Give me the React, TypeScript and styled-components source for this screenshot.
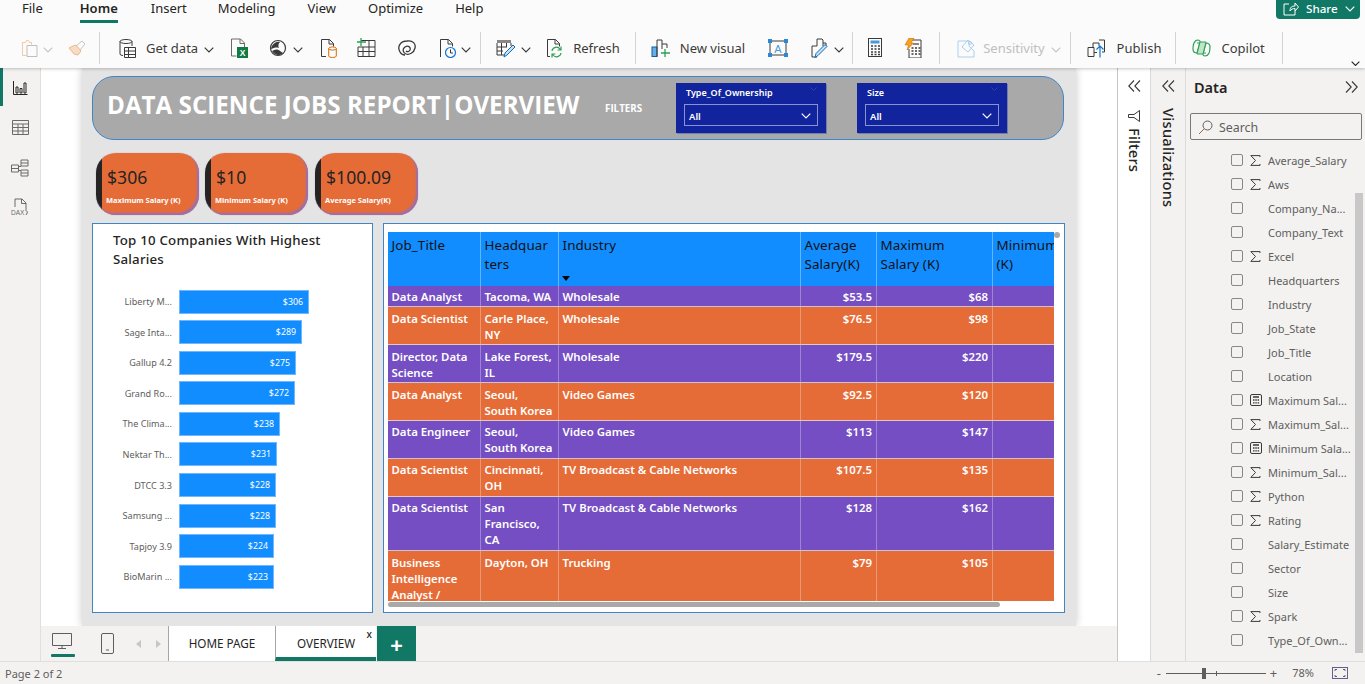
import React from "react";
import styled, { createGlobalStyle } from "styled-components";

const Global = createGlobalStyle`
  html, body { margin: 0; padding: 0; height: 100%; overflow: hidden; background: #fff; }
  body { font-family: "Noto Sans", "Open Sans", sans-serif; color: #252423; }
  * { box-sizing: border-box; }
`;

const Shell = styled.div`
  width: 1365px; height: 684px; display: grid; grid-template-rows: 68px 593px 23px; overflow: hidden;
`;
const Ribbon = styled.header`
  background: #fbfbfb; position: relative; z-index: 3; box-shadow: 0 1px 3px rgba(0,0,0,.22);
  display: flex; flex-direction: column;
`;
const TabRow = styled.nav`
  height: 28px; display: flex; align-items: flex-start; position: relative; padding-left: 22px;
`;
const MenuTab = styled.div<{ $ml: number; $active?: boolean }>`
  margin-left: ${p => p.$ml}px; height: 23px; font-size: 13px; line-height: 16px; color: #252423;
  font-weight: ${p => (p.$active ? 600 : 400)};
  border-bottom: ${p => (p.$active ? "3px solid #117865" : "3px solid transparent")};
`;
const ShareButton = styled.button`
  position: absolute; right: 5px; top: 0; width: 84px; height: 19px; border: 0; padding: 0 0 2px 7px;
  background: #117865; color: #fff; border-radius: 0 0 4px 4px; display: flex; align-items: center; gap: 7px;
  font: 500 11.6px "Noto Sans", sans-serif;
`;
const Toolbar = styled.div`
  height: 40px; display: flex; align-items: center; position: relative; padding-bottom: 0;
`;
const Tool = styled.div<{ $x: number; $faded?: boolean }>`
  margin-left: ${p => p.$x}px; display: flex; align-items: center; flex: none;
  font-size: 13px; color: ${p => (p.$faded ? "#c0bfbe" : "#3b3a39")}; white-space: nowrap;
`;
const Label = styled.span<{ $ml: number }>`
  margin-left: ${p => p.$ml}px;
`;
const Divider = styled.div<{ $x: number }>`
  margin-left: ${p => p.$x}px; width: 1px; height: 32px; background: #d4d3d2; flex: none;
`;
const CollapseRibbon = styled.div`
  position: absolute; right: 5px; bottom: 2px; line-height: 0;
`;

const Middle = styled.main`
  display: flex; min-height: 0;
`;
const Rail = styled.aside`
  width: 41px; background: #f3f2f1; border-right: 1px solid #e1dfdd; display: flex; flex-direction: column; align-items: center; flex: none; position: relative; padding-top: 10px; gap: 21px;
`;
const RailMark = styled.div`
  position: absolute; left: 0; top: 0; width: 3px; height: 38px; background: #117865;
`;
const RailIcon = styled.div`
  height: 19px; line-height: 0; display: flex; align-items: center;
`;
const CanvasColumn = styled.section`
  width: 1076px; display: flex; flex-direction: column; flex: none;
`;
const CanvasArea = styled.div`
  height: 558px; background: #fff; padding-left: 41px; overflow: hidden; flex: none;
`;
const Page = styled.div`
  width: 994px; height: 558px; background: #e4e4e4; box-shadow: 0 0 8px rgba(0,0,0,.22);
  padding: 8px 12px 13px 10px; display: flex; flex-direction: column;
`;
const Banner = styled.div`
  height: 64px; flex: none; background: #a9a9a9; border: 1px solid #3f86c9; border-radius: 22px;
  display: flex; align-items: center; position: relative; padding-left: 14px;
`;
const BannerTitle = styled.h1`
  margin: 0 0 6px; width: 498px; font-size: 24.2px; line-height: 30px; font-weight: 700; color: #fff; white-space: nowrap; flex: none; font-family: "Open Sans", sans-serif;
`;
const FiltersLabel = styled.div`
  width: 71px; font-size: 9.8px; font-weight: 700; color: #fff; flex: none; font-family: "Open Sans", sans-serif;
`;
const Slicer = styled.div<{ $ml?: number }>`
  width: 150px; height: 50px; margin-left: ${p => p.$ml ?? 0}px; background: #12239e; padding: 3px 8px 0; position: relative; flex: none; box-shadow: 1px 1px 0 rgba(70,90,170,.55);
`;
const SlicerTitle = styled.div`
  font-size: 9px; line-height: 14px; font-weight: 600; color: #fff; padding-left: 2px; margin-bottom: 4px;
`;
const SlicerClear = styled.div`
  position: absolute; right: 9px; top: 2px; line-height: 0;
`;
const SlicerBox = styled.div`
  height: 22px; border: 1px solid #8a93cf; display: flex; align-items: center; justify-content: space-between; padding: 2px 6px 0 4px; font-size: 9.5px; font-weight: 600; color: #fff;
`;
const KpiRow = styled.div`
  display: flex; margin: 13px 0 8px 4px; height: 62px; flex: none;
`;
const Kpi = styled.div<{ $ml: number }>`
  width: 103px; height: 62px; margin-left: ${p => p.$ml}px; background: linear-gradient(90deg, #252423 6px, #e66c37 6px); border-radius: 20px;
  box-shadow: inset -2px -2px 2px #9a6fb0, 0 0 1px #8a80b8; padding: 11px 0 0 11px; flex: none;
`;
const KpiValue = styled.div`
  font-size: 17.6px; line-height: 26px; color: #252423;
`;
const KpiCaption = styled.div`
  font-size: 7.5px; line-height: 10px; font-weight: 700; color: #fff; margin-top: 5px; white-space: nowrap; margin-left:-1px;
`;
const BottomRow = styled.div`
  display: flex; gap: 10px; height: 390px; flex: none;
`;
const ChartCard = styled.div`
  width: 281px; height: 390px; background: #fff; border: 1px solid #3f86c9; padding: 7px 0 0 20px; flex: none;
`;
const ChartTitle = styled.h2`
  margin: 0; width: 240px; font-size: 13.3px; line-height: 19px; font-weight: 500; color: #252423; letter-spacing: .2px;
`;
const Bars = styled.div`
  margin: 20.5px 0 0 -20px; display: flex; flex-direction: column; gap: 6.6px;
`;
const BarRow = styled.div`
  height: 24px; display: flex; align-items: center;
`;
const BarName = styled.div`
  width: 79px; text-align: right; font-size: 9.1px; color: #605e5c; flex: none; white-space: nowrap;
`;
const Bar = styled.div`
  height: 24px; margin-left: 7px; background: #118dff; border: 1px solid #70b8fb; color: #fff; font-size: 8.8px; display: flex; align-items: center; justify-content: flex-end; padding-right: 5px;
`;
const TableCard = styled.div`
  width: 682px; height: 390px; background: #fff; border: 1px solid #3f86c9; padding: 8px 0 0 4px; position: relative; flex: none;
`;
const TableClip = styled.div`
  width: 666px; height: 369px; overflow: hidden;
`;
const Row = styled.div<{ $h: number; $bg: string; $pt: number }>`
  display: grid; grid-template-columns: 93px 78px 242px 76px 116px 80px; width: 685px; height: ${p => p.$h}px; background: ${p => p.$bg}; overflow: hidden;
  border-bottom: 1px solid rgba(225,225,225,.8);
  & > div { padding-top: ${p => p.$pt}px; }
`;
const HeadRow = styled.div`
  display: grid; grid-template-columns: 93px 78px 242px 76px 116px 80px; width: 685px; height: 54px; background: #118dff;
`;
const HeadCell = styled.div`
  padding: 4px 3px 0 3.500px; font-size: 13.4px; line-height: 19px; color: #111; position: relative; letter-spacing: .1px;
  border-right: 1px solid rgba(255,255,255,.35); overflow: hidden; white-space: pre-line;
`;
const SortMark = styled.span`
  position: absolute; left: 3px; bottom: 5px; width: 0; height: 0; border: 4px solid transparent; border-top: 5px solid #000; border-bottom: 0;
`;
const Cell = styled.div<{ $num?: boolean }>`
  padding: 4px 4px 0 3.500px; font-size: 11.4px; line-height: 16px; font-weight: 600; color: #fff; text-align: ${p => (p.$num ? "right" : "left")};
  border-right: 1px solid rgba(255,255,255,.3); overflow: hidden; white-space: pre-line;
`;
const HScroll = styled.div`
  position: absolute; left: 4px; top: 378px; width: 612px; height: 5px; background: #a9a9a9; border-radius: 3px;
`;
const VScroll = styled.div`
  position: absolute; left: 670px; top: 8px; width: 6px; height: 6px; background: #a9a9a9; border-radius: 50%;
`;
const PageTabs = styled.div`
  height: 35px; background: #f3f2f1; display: flex; align-items: stretch; flex: none; position: relative;
`;
const ViewBtn = styled.div<{ $w: number; $on?: boolean }>`
  width: ${p => p.$w}px; display: flex; align-items: flex-start; justify-content: center; padding-top: 7px; flex: none; position: relative; line-height: 0;
  &::after { content: ""; display: ${p => (p.$on ? "block" : "none")}; position: absolute; left: 10px; right: 8px; bottom: 4px; height: 3px; border-radius: 1px; background: #117865; }
`;
const Arrows = styled.div`
  width: 37px; display: flex; align-items: center; justify-content: space-between; padding: 0 7px 0 5px; flex: none;
`;
const PageTab = styled.div<{ $w: number; $on?: boolean }>`
  width: ${p => p.$w}px; background: #fff; border-left: 1px solid #a6a6a6; position: relative; display: flex; align-items: center; justify-content: center; font-size: 11.7px; color: #252423; padding-top: 2px; flex: none;
  border-bottom: ${p => (p.$on ? "4px solid #117865" : "0")}; padding-bottom: ${p => (p.$on ? "0" : "4px")};
`;
const TabClose = styled.span`
  position: absolute; right: 4px; top: 2px; font-size: 10px; line-height: 12px; font-weight: 500;
`;
const AddTab = styled.div`
  width: 39px; background: #117865; color: #fff; font-size: 22px; font-weight: 700; display: flex; align-items: center; justify-content: center; flex: none; margin-left: 1px; line-height: 1;
`;
const SidePanel = styled.aside<{ $w: number }>`
  width: ${p => p.$w}px; background: #fff; border-left: 1px solid #c8c6c4; display: flex; flex-direction: column; align-items: center; padding-top: 12px; flex: none;
`;
const VizPanel = styled(SidePanel)`
  background: #f3f2f1; border-left-color: #dcdad8;
`;
const Vertical = styled.div<{ $mt: number }>`
  writing-mode: vertical-rl; font-size: 14.8px; line-height: 17px; margin-top: ${p => p.$mt}px; font-weight: 500; color: #252423; letter-spacing: .1px;
`;
const VerticalWide = styled(Vertical)`
  font-size: 14.7px; letter-spacing: .25px;
`;
const FunnelSlot = styled.div`
  margin-top: 18px; line-height: 0;
`;
const DataPanel = styled.aside`
  flex: 1; background: #f3f2f1; border-left: 1px solid #dcdad8; position: relative; padding: 7px 3px 0 4px; overflow: hidden;
`;
const DataHead = styled.div`
  height: 23px; display: flex; align-items: center; justify-content: space-between; font-size: 14.5px; font-weight: 600; padding: 0 4px 0 4px;
`;
const SearchBox = styled.div`
  height: 27px; margin-top: 15px; border: 1px solid #7a7876; border-radius: 2px; background: #f3f2f1; display: flex; align-items: center; padding: 1px 0 0 7px; gap: 6px; font-size: 12.4px; color: #605e5c;
`;
const Fields = styled.div`
  margin-top: 8px;
`;
const Field = styled.div`
  height: 24px; display: flex; align-items: center; padding-left: 41px; font-size: 11px; color: #605e5c; white-space: nowrap;
`;
const Check = styled.span`
  width: 12px; height: 12px; border: 1px solid #8a8886; border-radius: 2px; flex: none;
`;
const FieldIcon = styled.span`
  width: 12px; margin: 0 6px 0 7px; display: flex; line-height: 0; flex: none;
`;
const DataScroll = styled.div`
  position: absolute; left: 169px; top: 125px; width: 8px; height: 460px; background: #c8c8c8;
`;
const StatusBar = styled.footer`
  background: #f3f2f1; border-top: 1px solid #e1dfdd; display: flex; align-items: center; padding: 0 0 0 5px; font-size: 11px; color: #605e5c; position: relative; z-index: 2;
`;
const StatusRight = styled.div`
  margin-left: auto; display: flex; align-items: center; padding-right: 17px; line-height: 0;
`;
const Zoom = styled.div`
  margin-left: 5px; width: 100px; height: 1px; background: #605e5c; position: relative; margin-right: 4px;
`;
const ZoomThumb = styled.span`
  position: absolute; left: 36px; top: -5px; width: 4px; height: 11px; background: #605e5c;
`;
const ZoomTick = styled.span`
  position: absolute; left: 50px; top: -2px; width: 1px; height: 5px; background: #605e5c;
`;
const ZoomPct = styled.span`
  margin: 0 18px 0 15px; font-size: 11px; line-height: 14px; color: #605e5c;
`;
const ZoomSign = styled.span`
  font-size: 13px; line-height: 14px; color: #605e5c;
`;

const Chevron = ({ c = "#3b3a39", w = 10 }: { c?: string; w?: number }) => (
  <svg width={w} height={w * 0.6} viewBox="0 0 10 6" fill="none"><path d="M.7.7 5 5 9.3.7" stroke={c} strokeWidth="1.2" /></svg>
);

const I = ({ children, w = 20, h = 20 }: { children: React.ReactNode; w?: number; h?: number }) => (
  <svg width={w} height={h} viewBox={`0 0 ${w} ${h}`} fill="none" strokeWidth="1">{children}</svg>
);

const dk = "#3b3a39";
const Paste = () => <I w={18}><path d="M1.5 4.5h3l1-2h2l1 2h2v2" stroke="#f2c9a5"/><path d="M1.5 4.5v13h4" stroke="#f2c9a5"/><path d="M6 7.5h10v11H6z" stroke="#bfbebd"/></I>;
const Brush = () => <I><path d="M1 10l5 6 4 1 3-4-5-6-3 1z" fill="#f6dcc2" stroke="#eeb98c"/><path d="M8 8l6-5 3 3-5 6" stroke="#c6c5c4"/></I>;
const GetData = () => <I w={18}><ellipse cx="8" cy="3.5" rx="6" ry="2" stroke={dk}/><path d="M2 3.5V16q0 1.5 3 1.5M14 3.5V8" stroke={dk}/><path d="M6.5 9.5h11v10h-11zM6.5 13h11M6.5 16.5h11M10.5 9.5v10" stroke={dk}/></I>;
const Excel = () => <I w={19}><path d="M1.5 1h9l4 4v4M1.5 1v17h5M10 1v4.5h4.5" stroke="#6b6a69"/><rect x="7" y="9" width="11" height="11" fill="#107c41"/><text x="12.5" y="18" fontSize="8.5" fontWeight="700" fill="#fff" textAnchor="middle" fontFamily="Liberation Sans">X</text></I>;
const OneLake = () => <I w={18}><circle cx="9" cy="10" r="7.5" stroke={dk} strokeWidth="1.2"/><path d="M2 11c1-5 5-8 9-7-2 2-2 4-1 6-3-1-5 0-8 1zM3 13c3-2 6-2 8 0l3 2c-3 3-8 3-11-2z" fill={dk}/></I>;
const FileDb = () => <I w={18}><path d="M1.5 18.5v-17h8l4 4v3M9 1.5V6h4.5M1.5 18.5H6" stroke={dk}/><ellipse cx="12.5" cy="10.5" rx="3.8" ry="1.6" stroke="#d96b00"/><path d="M8.7 10.5V18q0 1.5 3.8 1.5t3.8-1.5v-7.500" stroke="#d96b00"/></I>;
const AddTable = () => <I><path d="M5 2.500h14v16H2V9M2 9h17M2 13.500h17M7 9v9.500M13 3v15.500" stroke={dk}/><path d="M5 0v8M1 4h9" stroke="#2f9e55" strokeWidth="1.300"/></I>;
const Dataverse = () => <I><path d="M3 14C0 9 3 3 10 3c6-1 9 3 8 7-1 5-6 7-9 6-3-1-4-5-1-7 3-2 6 0 5 3-1 2-3 2-4 1" stroke={dk} strokeWidth="1.300"/><path d="M3 14c1 2 3 3 5 3" stroke={dk} strokeWidth="1.300"/></I>;
const Recent = () => <I w={18}><path d="M1.500 19V1.500h8l4 4v3M9 1.500V6h4.500" stroke={dk}/><circle cx="11.500" cy="14.500" r="5" fill="#fbfbfb" stroke="#0f78d4" strokeWidth="1.200"/><path d="M11.500 11.500v3.500h2.500" stroke={dk}/></I>;
const Transform = () => <I w={19}><path d="M1 2h14v3H1z" fill="#8a8886"/><path d="M1 5v12h7M1 9h10M1 13h6M5.500 5v12M10.500 5v4M15 5v3" stroke={dk}/><path d="M8 19l1-4 8-8 2 2-8 8z" fill="#c7e0f4" stroke="#0f6cbd"/></I>;
const Refresh = () => <I w={17}><path d="M1.500 18.500v-17h8l4 4v3M9 1.500V6h4.500M1.500 18.500H4" stroke={dk}/><path d="M6 13a4.500 4.500 0 0 1 8-2l1 1M15 8.500V12h-3.500M15 15a4.500 4.500 0 0 1-8 2l-1-1M6 19.500V16h3.500" stroke="#2f9e55" strokeWidth="1.200"/></I>;
const NewVisual = () => <I w={19}><rect x="1" y="9" width="5" height="9.500" fill="#6aaee8" stroke="#0f5ea8"/><path d="M6 18.500V2h5v9M11 6h5v4" stroke={dk}/><path d="M14 11v8M10 15h9" stroke="#2f9e55" strokeWidth="1.300"/></I>;
const TextBox = () => <I><rect x="2" y="3" width="16" height="14" stroke={dk}/><text x="10" y="14.500" fontSize="11" fill="#4a9ad9" textAnchor="middle" fontFamily="Liberation Sans">A</text><path d="M0 1h4v4H0zM16 1h4v4h-4zM0 15h4v4H0zM16 15h4v4h-4z" fill="#2b88d8"/></I>;
const MoreVisual = () => <I w={19}><path d="M6 19h-5V8h5V1h5l1 1v6M12 5h3v4" stroke={dk}/><path d="M4 19.500l1-4 9-9 2 2-9 9z" fill="#c7e0f4" stroke="#0f6cbd"/></I>;
const Calc = () => <I w={15}><rect x=".5" y=".5" width="13" height="18" stroke={dk}/><rect x="2.500" y="2.500" width="9" height="3" fill="#4a9ad9"/><path d="M3 8h2M6.500 8h2M10 8h2M3 11h2M6.500 11h2M10 11h2M3 14h2M6.500 14h2M10 14h2M3 16.500h2M6.500 16.500h2M10 16.500h2" stroke={dk} strokeWidth="1.500"/></I>;
const Quick = () => <I w={18}><path d="M7 2h10v18H5V11" stroke={dk}/><path d="M9 5h6v2H9z" fill="#8a8886"/><path d="M7.500 10h2M11 10h2M14.500 10h2M7.500 13h2M11 13h2M14.500 13h2M7.500 16h2M11 16h2M14.500 16h2" stroke={dk} strokeWidth="1.400"/><path d="M5 0h5L7 5h2.500L3 12l1.500-5H1z" fill="#f3a321" stroke="#d96b00" strokeWidth=".6"/></I>;
const Sensitivity = () => <I w={19}><path d="M1 3h11v5l5 5v6H1z" stroke="#a9d0ef"/><path d="M5 9l6-7 6 5-6 7z" stroke="#a9d0ef"/><circle cx="13" cy="5" r="1.500" stroke="#a9d0ef"/></I>;
const Publish = () => <I w={19}><path d="M1 9.500h6v9H1zM7 14.500h3M6 9.500V5h6v3M12 2h5.500v12H15" stroke={dk}/><path d="M13 19.500V8M9.500 11.500 13 8l3.500 3.500" stroke="#0f78d4" strokeWidth="1.200"/></I>;
const Copilot = () => <I w={19}><path d="M6 2c-4 0-5 5-5 9 0 3 2 4 4 4l3-11c.500-1-1-2-2-2zM13 18c4 0 5-5 5-9 0-3-2-4-4-4l-3 11c-.500 1 1 2 2 2z" stroke="#2f9e55" strokeWidth="1.200"/><path d="M5 5h9M5 15h9" stroke="#2f9e55" strokeWidth="1.200"/><path d="M8 4h6l-3 12H5z" fill="#bfe6c7" stroke="#2f9e55"/></I>;

const DoubleLeft = () => <svg width="13" height="12" viewBox="0 0 13 12" fill="none"><path d="M6 .5.800 6 6 11.500M12 .5 6.800 6 12 11.500" stroke="#3b3a39" strokeWidth="1.100"/></svg>;
const DoubleRight = () => <svg width="13" height="12" viewBox="0 0 13 12" fill="none"><path d="M1 .5 6.200 6 1 11.500M7 .5 12.200 6 7 11.500" stroke="#3b3a39" strokeWidth="1.100"/></svg>;
const Funnel = () => <svg width="12" height="12" viewBox="0 0 12 12" fill="none"><path d="M11.500.5v11L6 7.500H.5v-3H6z" stroke="#3b3a39" /></svg>;
const Sigma = () => <svg width="11" height="11" viewBox="0 0 11 11" fill="none"><path d="M10 2V.6H.8L5.500 5.500.8 10.400H10V9" stroke="#3b3a39"/></svg>;
const CalcMini = () => <svg width="12" height="12" viewBox="0 0 12 12" fill="none"><rect x=".500" y=".500" width="11" height="11" rx="1.500" stroke="#3b3a39"/><path d="M3 3h6" stroke="#3b3a39" strokeWidth="1.500"/><path d="M3 6h1.500M5.300 6h1.500M7.600 6h1.500M3 8.800h1.500M5.300 8.800h1.500M7.600 8.800h1.500" stroke="#3b3a39" strokeWidth="1.300"/></svg>;
const SearchGlyph = () => <svg width="15" height="15" viewBox="0 0 15 15" fill="none"><circle cx="9.500" cy="5.500" r="4.500" stroke="#605e5c"/><path d="M6 9 1 14" stroke="#8a6d3b"/></svg>;

const menu: [string, number, boolean?][] = [["File", 0], ["Home", 37, true], ["Insert", 33], ["Modeling", 31], ["View", 32], ["Optimize", 32], ["Help", 32]];

const bars: [string, number][] = [["Liberty M...", 306], ["Sage Inta...", 289], ["Gallup 4.2", 275], ["Grand Ro...", 272], ["The Clima...", 238], ["Nektar Th...", 231], ["DTCC 3.3", 228], ["Samsung ...", 228], ["Tapjoy 3.9", 224], ["BioMarin ...", 223]];

const rows: { h: number; pt: number; cells: string[] }[] = [
  { h: 21, pt: 3, cells: ["Data Analyst", "Tacoma, WA", "Wholesale", "$53.5", "$68"] },
  { h: 38, pt: 4, cells: ["Data Scientist", "Carle Place,\nNY", "Wholesale", "$76.5", "$98"] },
  { h: 38, pt: 4, cells: ["Director, Data\nScience", "Lake Forest,\nIL", "Wholesale", "$179.5", "$220"] },
  { h: 38, pt: 4, cells: ["Data Analyst", "Seoul,\nSouth Korea", "Video Games", "$92.5", "$120"] },
  { h: 38, pt: 3, cells: ["Data Engineer", "Seoul,\nSouth Korea", "Video Games", "$113", "$147"] },
  { h: 38, pt: 3, cells: ["Data Scientist", "Cincinnati,\nOH", "TV Broadcast & Cable Networks", "$107.5", "$135"] },
  { h: 54, pt: 3, cells: ["Data Scientist", "San\nFrancisco,\nCA", "TV Broadcast & Cable Networks", "$128", "$162"] },
  { h: 51, pt: 4, cells: ["Business\nIntelligence\nAnalyst /", "Dayton, OH", "Trucking", "$79", "$105"] },
];

const fields: [string, ("sum" | "calc" | null)][] = [
  ["Average_Salary", "sum"], ["Aws", "sum"], ["Company_Na...", null], ["Company_Text", null], ["Excel", "sum"], ["Headquarters", null], ["Industry", null], ["Job_State", null], ["Job_Title", null], ["Location", null], ["Maximum Sal...", "calc"], ["Maximum_Sal...", "sum"], ["Minimum Sala...", "calc"], ["Minimum_Sal...", "sum"], ["Python", "sum"], ["Rating", "sum"], ["Salary_Estimate", null], ["Sector", null], ["Size", null], ["Spark", "sum"], ["Type_Of_Own...", null],
];

export default function App() {
  return (
    <Shell>
      <Global />
      <Ribbon>
        <TabRow>
          {menu.map(([t, ml, a]) => <MenuTab key={t} $ml={ml} $active={a}>{t}</MenuTab>)}
          <ShareButton>
            <svg width="16" height="14" viewBox="0 0 16 14" fill="none"><path d="M6 2H1v11h11V9M7 9c0-4 2-5 5-5V1l3.500 4L12 9V6.500C10 6.500 8 7 7 9z" stroke="#fff" /></svg>
            Share <Chevron c="#fff" />
          </ShareButton>
        </TabRow>
        <Toolbar>
          <Tool $x={21} $faded><Paste /><Label $ml={4}><Chevron c="#c8c6c4" /></Label></Tool>
          <Tool $x={15}><Brush /></Tool>
          <Divider $x={11} />
          <Tool $x={18}><GetData /><Label $ml={10}>Get data</Label><Label $ml={6}><Chevron /></Label></Tool>
          <Tool $x={16}><Excel /></Tool>
          <Tool $x={20}><OneLake /><Label $ml={6}><Chevron /></Label></Tool>
          <Tool $x={17}><FileDb /></Tool>
          <Tool $x={18}><AddTable /></Tool>
          <Tool $x={21}><Dataverse /></Tool>
          <Tool $x={22}><Recent /><Label $ml={4}><Chevron /></Label></Tool>
          <Divider $x={9} />
          <Tool $x={15}><Transform /><Label $ml={6}><Chevron /></Label></Tool>
          <Tool $x={15}><Refresh /><Label $ml={10}>Refresh</Label></Tool>
          <Divider $x={15} />
          <Tool $x={15}><NewVisual /><Label $ml={10}>New visual</Label></Tool>
          <Tool $x={23}><TextBox /></Tool>
          <Tool $x={23}><MoreVisual /><Label $ml={4}><Chevron /></Label></Tool>
          <Divider $x={8} />
          <Tool $x={15}><Calc /></Tool>
          <Tool $x={21}><Quick /></Tool>
          <Divider $x={17} />
          <Tool $x={17} $faded><Sensitivity /><Label $ml={7}>Sensitivity</Label><Label $ml={6}><Chevron c="#c8c6c4" /></Label></Tool>
          <Divider $x={9} />
          <Tool $x={16}><Publish /><Label $ml={11}>Publish</Label></Tool>
          <Divider $x={14} />
          <Tool $x={16}><Copilot /><Label $ml={10}>Copilot</Label></Tool>
          <Divider $x={17} />
          <CollapseRibbon><Chevron c="#252423" w={9} /></CollapseRibbon>
        </Toolbar>
      </Ribbon>

      <Middle>
        <Rail>
          <RailMark />
          <RailIcon><svg width="15" height="15" viewBox="0 0 15 15" fill="none" stroke="#252423"><path d="M.500 1v13.500H14.500M3 13V7h2v6zM7 13V8.500h2V13zM11 13V3h2v10z" /></svg></RailIcon>
          <RailIcon><svg width="17" height="15" viewBox="0 0 17 15" fill="none" stroke="#6b6a69"><path d="M.500.500h16v14H.500zM.500 4h16M.500 7.500h16M.500 11h16M6 4v10.500M11 4v10.500" /></svg></RailIcon>
          <RailIcon><svg width="18" height="18" viewBox="0 0 18 18" fill="none" stroke="#6b6a69"><path d="M.500 6h7v7h-7zM.500 9.500h7M10 1h7v6h-7zM10 4h7M10 11h7v6h-7zM10 14h7M7.500 7.500H10M7.500 11.500H10" /></svg></RailIcon>
          <RailIcon><svg width="18" height="19" viewBox="0 0 18 19" fill="none"><path d="M4 9V1h7l4 4v8M10.500 1v4.500H15M16 13q1 2-1 4" stroke="#6b6a69" /><text x="0" y="17" fontSize="6.500" fill="#6b6a69" fontFamily="Liberation Sans">DAX</text></svg></RailIcon>
        </Rail>
        <CanvasColumn>
          <CanvasArea>
            <Page>
              <Banner>
                <BannerTitle>DATA SCIENCE JOBS REPORT|OVERVIEW</BannerTitle>
                <FiltersLabel>FILTERS</FiltersLabel>
                <Slicer>
                  <SlicerTitle>Type_Of_Ownership</SlicerTitle>
                  <SlicerClear><Chevron c="#3b4aa8" w={7} /></SlicerClear>
                  <SlicerBox>All <Chevron c="#fff" w={10} /></SlicerBox>
                </Slicer>
                <Slicer $ml={31}>
                  <SlicerTitle>Size</SlicerTitle>
                  <SlicerClear><Chevron c="#3b4aa8" w={7} /></SlicerClear>
                  <SlicerBox>All <Chevron c="#fff" w={10} /></SlicerBox>
                </Slicer>
              </Banner>
              <KpiRow>
                <Kpi $ml={0}><KpiValue>$306</KpiValue><KpiCaption>Maximum Salary (K)</KpiCaption></Kpi>
                <Kpi $ml={6}><KpiValue>$10</KpiValue><KpiCaption>Minimum Salary (K)</KpiCaption></Kpi>
                <Kpi $ml={7}><KpiValue>$100.09</KpiValue><KpiCaption>Average Salary(K)</KpiCaption></Kpi>
              </KpiRow>
              <BottomRow>
                <ChartCard>
                  <ChartTitle>Top 10 Companies With Highest Salaries</ChartTitle>
                  <Bars>
                    {bars.map(([n, v]) => (
                      <BarRow key={n}>
                        <BarName>{n}</BarName>
                        <Bar style={{ width: Math.round((v / 306) * 130) }}>${v}</Bar>
                      </BarRow>
                    ))}
                  </Bars>
                </ChartCard>
                <TableCard>
                  <TableClip>
                    <HeadRow>
                      <HeadCell>Job_Title</HeadCell>
                      <HeadCell>{"Headquar\nters"}</HeadCell>
                      <HeadCell>Industry<SortMark /></HeadCell>
                      <HeadCell>{"Average\nSalary(K)"}</HeadCell>
                      <HeadCell>{"Maximum\nSalary (K)"}</HeadCell>
                      <HeadCell>{"Minimum\n(K)"}</HeadCell>
                    </HeadRow>
                    {rows.map((r, i) => (
                      <Row key={i} $h={r.h} $pt={r.pt} $bg={i % 2 ? "#e66c37" : "#744ec2"}>
                        <Cell>{r.cells[0]}</Cell>
                        <Cell>{r.cells[1]}</Cell>
                        <Cell>{r.cells[2]}</Cell>
                        <Cell $num>{r.cells[3]}</Cell>
                        <Cell $num>{r.cells[4]}</Cell>
                        <Cell />
                      </Row>
                    ))}
                  </TableClip>
                  <HScroll />
                  <VScroll />
                </TableCard>
              </BottomRow>
            </Page>
          </CanvasArea>
          <PageTabs>
            <ViewBtn $w={42} $on>
              <svg width="20" height="16" viewBox="0 0 20 16" fill="none" stroke="#605e5c"><path d="M.500.500h19v12H.500zM10 12.500v2.500M6 15.500h8" /></svg>
            </ViewBtn>
            <ViewBtn $w={48}>
              <svg width="13" height="21" viewBox="0 0 13 21" fill="none"><rect x=".500" y=".500" width="12" height="20" rx="1.500" stroke="#605e5c" /><path d="M5 17h3" stroke="#605e5c" /></svg>
            </ViewBtn>
            <Arrows>
              <svg width="5" height="8" viewBox="0 0 5 8"><path d="M5 0v8L0 4z" fill="#c8c6c4" /></svg>
              <svg width="5" height="8" viewBox="0 0 5 8"><path d="M0 0v8l5-4z" fill="#c8c6c4" /></svg>
            </Arrows>
            <PageTab $w={107}>HOME PAGE</PageTab>
            <PageTab $w={101} $on>OVERVIEW<TabClose>x</TabClose></PageTab>
            <AddTab>+</AddTab>
          </PageTabs>
        </CanvasColumn>
        <SidePanel $w={33}>
          <DoubleLeft />
          <FunnelSlot><Funnel /></FunnelSlot>
          <Vertical $mt={6}>Filters</Vertical>
        </SidePanel>
        <VizPanel $w={35}>
          <DoubleLeft />
          <VerticalWide $mt={16}>Visualizations</VerticalWide>
        </VizPanel>
        <DataPanel>
          <DataHead>Data <DoubleRight /></DataHead>
          <SearchBox><SearchGlyph />Search</SearchBox>
          <Fields>
            {fields.map(([n, k]) => (
              <Field key={n}>
                <Check />
                <FieldIcon>{k === "sum" ? <Sigma /> : k === "calc" ? <CalcMini /> : null}</FieldIcon>
                {n}
              </Field>
            ))}
          </Fields>
          <DataScroll />
        </DataPanel>
      </Middle>

      <StatusBar>
        Page 2 of 2
        <StatusRight>
          <ZoomSign>-</ZoomSign>
          <Zoom><ZoomThumb /><ZoomTick /></Zoom>
          <ZoomSign>+</ZoomSign>
          <ZoomPct>78%</ZoomPct>
          <svg width="16" height="12" viewBox="0 0 16 12" fill="none"><rect x=".500" y=".500" width="15" height="11" stroke="#6b5b95" /><path d="M3 4V2.500h2M11 2.500h2V4M13 8v1.500h-2M5 9.500H3V8" stroke="#605e5c" /></svg>
        </StatusRight>
      </StatusBar>
    </Shell>
  );
}
